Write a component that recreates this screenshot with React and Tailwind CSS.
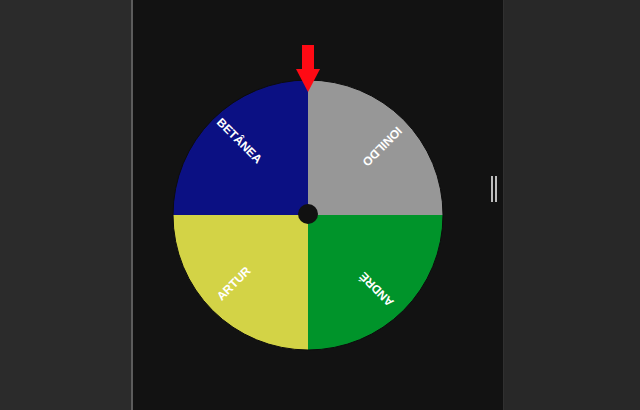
const SLICES = [
  { name: "BETÂNEA", color: "#0b1083", start: 180, label: -135, rot: 45 },
  { name: "IONILDO", color: "#979797", start: 270, label: -45, rot: 135 },
  { name: "ANDRÉ", color: "#00942a", start: 0, label: 45, rot: 225 },
  { name: "ARTUR", color: "#d3d346", start: 90, label: 135, rot: -45 },
];

const CX = 150;
const CY = 175;
const R = 135;

function pt(deg, r) {
  const a = (deg * Math.PI) / 180;
  return [CX + r * Math.cos(a), CY + r * Math.sin(a)];
}

function Wheel() {
  return (
    <svg width="300" height="320" viewBox="0 0 300 320">
      {SLICES.map((s) => {
        const [x1, y1] = pt(s.start, R);
        const [x2, y2] = pt(s.start + 90, R);
        return (
          <path
            key={s.name}
            d={`M${CX} ${CY} L${x1} ${y1} A${R} ${R} 0 0 1 ${x2} ${y2} Z`}
            fill={s.color}
          />
        );
      })}
      <circle cx={CX} cy={CY} r={R} fill="none" stroke="#0c0c0c" strokeWidth="1" />
      {SLICES.map((s) => {
        const [x, y] = pt(s.label, 101);
        return (
          <text
            key={s.name + "-t"}
            x={x}
            y={y}
            fill="#ffffff"
            fontSize="12"
            fontWeight="700"
            fontFamily="'Liberation Sans', Arial, sans-serif"
            textAnchor="middle"
            transform={`rotate(${s.rot} ${x} ${y})`}
          >
            {s.name}
          </text>
        );
      })}
      <circle cx={CX} cy={CY - 1} r="10" fill="#111111" />
      <rect x="144" y="5" width="12" height="25" fill="#ff0a14" />
      <polygon points="138,29 162,29 150,52" fill="#ff0a14" />
    </svg>
  );
}

export default function App() {
  return (
    <div className="flex h-[410px] w-[640px] overflow-hidden bg-[#121212]">
      <div className="w-[133px] shrink-0 bg-[#2b2b2b] border-r-2 border-[#5c5c5c]" />
      <div className="flex flex-1 items-start">
        <div className="ml-[25px] mt-[40px]">
          <Wheel />
        </div>
        <div className="ml-[33px] mt-[176px] flex gap-[2px]">
          <div className="h-[26px] w-[2px] bg-[#bdbdbd]" />
          <div className="h-[26px] w-[2px] bg-[#bdbdbd]" />
        </div>
      </div>
      <div className="w-[137px] shrink-0 bg-[#282828] border-l border-[#303030]" />
    </div>
  );
}
